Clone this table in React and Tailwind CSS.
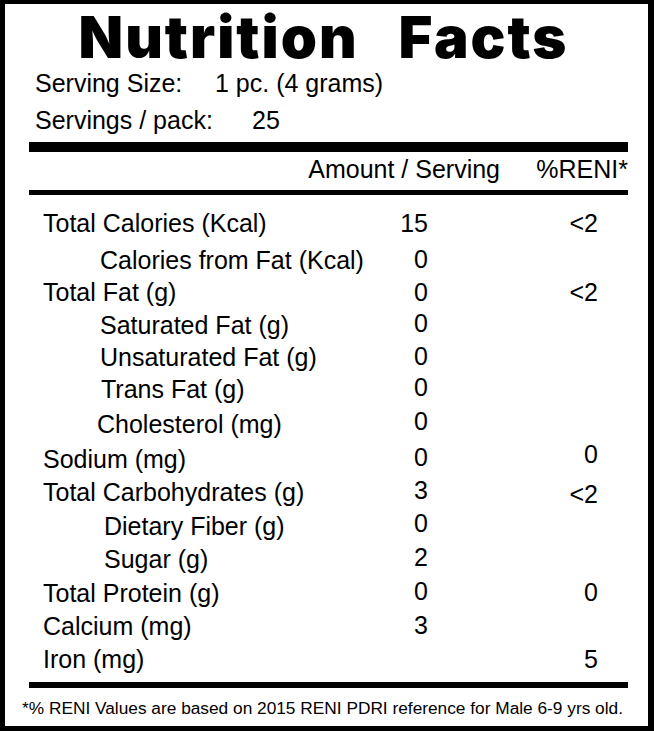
import React from "react";

const rows = [
  { label: "Total Calories (Kcal)", pl: "pl-[14px]", amt: "15", reni: "<2", h: "h-[37px]", ao: "", ro: "" },
  { label: "Calories from Fat (Kcal)", pl: "pl-[71px]", amt: "0", reni: "", h: "h-[32px]", ao: "mt-[-1px]", ro: "" },
  { label: "Total Fat (g)", pl: "pl-[14px]", amt: "0", reni: "<2", h: "h-[33px]", ao: "", ro: "" },
  { label: "Saturated Fat (g)", pl: "pl-[71px]", amt: "0", reni: "", h: "h-[32px]", ao: "mt-[-2px]", ro: "" },
  { label: "Unsaturated Fat (g)", pl: "pl-[71px]", amt: "0", reni: "", h: "h-[32px]", ao: "mt-[-1px]", ro: "" },
  { label: "Trans Fat (g)", pl: "pl-[72px]", amt: "0", reni: "", h: "h-[35px]", ao: "mt-[-2px]", ro: "" },
  { label: "Cholesterol (mg)", pl: "pl-[68px]", amt: "0", reni: "", h: "h-[35px]", ao: "mt-[-3px]", ro: "" },
  { label: "Sodium (mg)", pl: "pl-[14px]", amt: "0", reni: "0", h: "h-[33px]", ao: "mt-[-2px]", ro: "mt-[-5px]" },
  { label: "Total Carbohydrates (g)", pl: "pl-[14px]", amt: "3", reni: "<2", h: "h-[34px]", ao: "mt-[-2px]", ro: "mt-[2px]" },
  { label: "Dietary Fiber (g)", pl: "pl-[75px]", amt: "0", reni: "", h: "h-[33px]", ao: "mt-[-3px]", ro: "" },
  { label: "Sugar (g)", pl: "pl-[75px]", amt: "2", reni: "", h: "h-[34px]", ao: "mt-[-2px]", ro: "" },
  { label: "Total Protein (g)", pl: "pl-[14px]", amt: "0", reni: "0", h: "h-[33px]", ao: "mt-[-2px]", ro: "mt-[-1px]" },
  { label: "Calcium (mg)", pl: "pl-[14px]", amt: "3", reni: "", h: "h-[33px]", ao: "mt-[-1px]", ro: "" },
  { label: "Iron (mg)", pl: "pl-[14px]", amt: "", reni: "5", h: "h-[35px]", ao: "", ro: "" },
];

export default function App() {
  return (
    <div className="w-[654px] h-[731px] bg-white text-black border-solid border-black border-t-4 border-l-[5px] border-r-[6px] border-b-[5px] flex flex-col overflow-hidden font-['Liberation_Sans',Arial,sans-serif]">
      <div className="mt-[4px] h-[58px] flex justify-center gap-[40px] pr-[6px] text-[58px] leading-[58px] font-black font-['Inter',sans-serif] tracking-[2px]">
        <span>Nutrition</span>
        <span>Facts</span>
      </div>

      <div className="mt-[5px] h-[25px] flex pl-[30px] text-[25px] leading-[25px]">
        <span className="w-[180px]">Serving Size:</span>
        <span>1 pc. (4 grams)</span>
      </div>
      <div className="mt-[12px] h-[25px] flex pl-[30px] text-[25px] leading-[25px]">
        <span className="w-[217px]">Servings / pack:</span>
        <span>25</span>
      </div>

      <div className="mt-[9px] ml-[24px] mr-[20px] h-[10px] bg-black" />

      <div className="mt-[5px] h-[25px] flex ml-[24px] mr-[20px] text-[25px] leading-[25px]">
        <div className="w-[471px] text-right">Amount / Serving</div>
        <div className="flex-1 text-right">%RENI*</div>
      </div>

      <div className="mt-[8px] ml-[24px] mr-[20px] h-[5px] bg-black" />

      <div className="mt-[16px] ml-[24px] mr-[20px] flex flex-col text-[25px] leading-[25px]">
        {rows.map((r) => (
          <div key={r.label} className={`flex items-start ${r.h}`}>
            <div className={`w-[349px] ${r.pl}`}>{r.label}</div>
            <div className={`w-[50px] text-right ${r.ao}`}>{r.amt}</div>
            <div className={`w-[170px] text-right ${r.ro}`}>{r.reni}</div>
          </div>
        ))}
      </div>

      <div className="ml-[24px] mr-[20px] h-[6px] bg-black" />

      <div className="mt-[11px] h-[18px] text-center text-[17.3px] leading-[18px] pr-[8px]">
        *% RENI Values are based on 2015 RENI PDRI reference for Male 6-9 yrs old.
      </div>
    </div>
  );
}
